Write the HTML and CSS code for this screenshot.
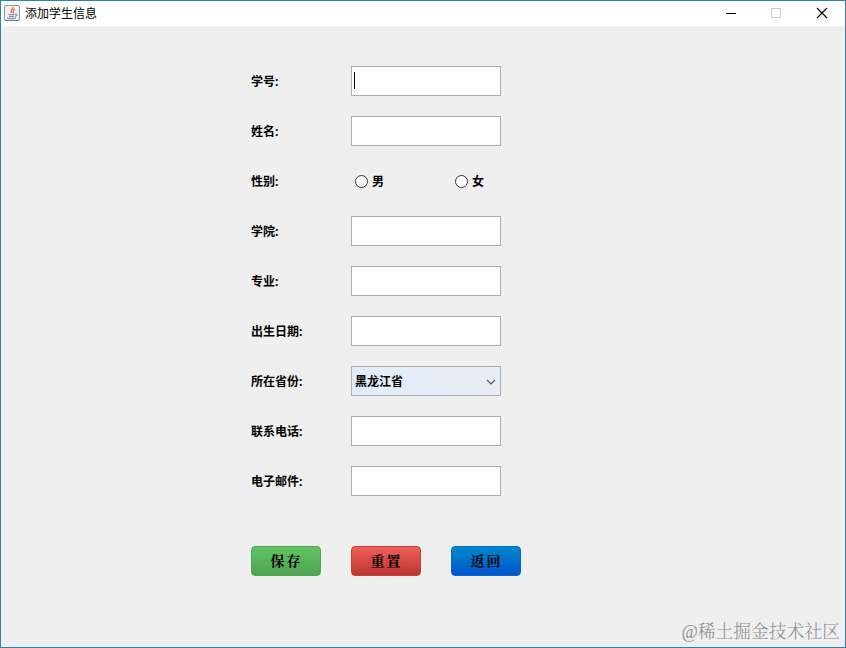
FILE: index.html
```html
<!DOCTYPE html>
<html lang="zh-CN">
<head>
<meta charset="utf-8">
<title>添加学生信息</title>
<link rel="stylesheet" href="styles.css">
</head>
<body>
<div class="window">
  <header class="titlebar">
    <svg class="app-icon" width="16" height="16" viewBox="0 0 16 16" fill="none">
      <rect x=".5" y=".5" width="15" height="15" rx="1.5" fill="#eef2f5" stroke="#8495a6"/>
      <path d="M1 15.500h14" stroke="#66798d"/>
      <path d="M9 2c1.200 2-3.600 3-1.400 6M10.800 4.200C7.800 5.500 10.200 6.700 8.800 8.400" stroke="#e8763a" stroke-width="1.400"/>
      <path d="M4.500 9.300c1.500.7 4.500.6 6 0M5 11.200c1.300.6 3.700.6 5 0M3 12.900c2.500 1.200 7 1 9 0M11 9.200c2.800-.7 2.800 1.700 0 2" stroke="#52799e"/>
    </svg>
    <span class="title">添加学生信息</span>
    <svg class="control" width="46" height="25" viewBox="0 0 46 25"><path d="M18 12.500h10" stroke="#000"/></svg>
    <svg class="control" width="45" height="25" viewBox="0 0 45 25"><rect x="17.500" y="7.500" width="9" height="9" fill="none" stroke="#ccc"/></svg>
    <svg class="control" width="46" height="25" viewBox="0 0 46 25"><path d="M18 7l10 10M28 7l-10 10" stroke="#000" stroke-width="1.100"/></svg>
  </header>
  <main class="content">
    <form class="form">
      <div class="row"><span class="label">学号:</span><div class="field"><i class="caret"></i></div></div>
      <div class="row"><span class="label">姓名:</span><div class="field"></div></div>
      <div class="row"><span class="label">性别:</span>
        <div class="choices">
          <span class="choice"><i class="radio"></i><span class="text">男</span></span>
          <span class="choice"><i class="radio"></i><span class="text">女</span></span>
        </div>
      </div>
      <div class="row"><span class="label">学院:</span><div class="field"></div></div>
      <div class="row"><span class="label">专业:</span><div class="field"></div></div>
      <div class="row"><span class="label">出生日期:</span><div class="field"></div></div>
      <div class="row"><span class="label">所在省份:</span>
        <div class="field select"><span class="text">黑龙江省</span>
          <svg class="chevron" width="10" height="6" viewBox="0 0 10 6"><path d="M1 1l4 4 4-4" fill="none" stroke="#555" stroke-width="1.100"/></svg>
        </div>
      </div>
      <div class="row"><span class="label">联系电话:</span><div class="field"></div></div>
      <div class="row"><span class="label">电子邮件:</span><div class="field"></div></div>
      <div class="actions">
        <button type="button" class="button save">保存</button>
        <button type="button" class="button reset">重置</button>
        <button type="button" class="button back">返回</button>
      </div>
    </form>
    <span class="watermark">@稀土掘金技术社区</span>
  </main>
</div>
</body>
</html>
```
FILE: styles.css
```css
* { box-sizing: border-box; }
body { margin: 0; }
.window {
  position: relative;
  width: 846px;
  height: 648px;
  border: 1px solid #2f80b4;
  background: #efefef;
  font: 12px "Noto Sans CJK SC", sans-serif;
  color: #000;
  overflow: hidden;
}
.titlebar {
  display: flex;
  align-items: center;
  height: 25px;
  padding-left: 3px;
  background: #fff;
}
.app-icon { margin-bottom: 1px; }
.title { flex: 1; margin-left: 5px; padding-bottom: 2px; line-height: 22px; }
.control { display: block; }
.content { padding: 40px 0 0 250px; }
.form { display: flex; flex-direction: column; gap: 20px; }
.row { display: flex; height: 30px; align-items: center; }
.label {
  width: 100px;
  padding-top: 2px;
  font-family: "Open Sans", "Noto Sans CJK SC", sans-serif;
  font-weight: 700;
  line-height: 30px;
}
.text { line-height: 18px; }
.field {
  display: flex;
  align-items: center;
  width: 150px;
  height: 30px;
  padding: 0 2px;
  border: 1px solid #abadb3;
  background: #fff;
}
.caret { width: 1px; height: 17px; margin-bottom: 2px; background: #000; }
.choices { display: flex; }
.choice {
  display: flex;
  align-items: center;
  gap: 4px;
  width: 100px;
  padding-left: 4px;
  font-weight: 700;
}
.radio {
  width: 13px;
  height: 13px;
  border: 1px solid #333;
  border-radius: 50%;
  background: #fff;
}
.select {
  justify-content: space-between;
  padding: 0 4px 0 3px;
  background: linear-gradient(90deg, #e2ecf8, #e7ecf5);
  font-weight: 700;
}
.chevron { margin-top: 2px; }
.actions { display: flex; gap: 30px; margin-top: 30px; }
.button {
  width: 70px;
  height: 30px;
  padding: 0 0 2px 1px;
  border: 1px solid;
  border-radius: 4px;
  font: 700 14px/24px "AR PL UKai CN", "Noto Serif CJK SC", "Noto Sans CJK SC", serif;
  letter-spacing: 2px;
  color: #000;
}
.save { border-color: #4da750; background: linear-gradient(#62c462, #51a351); }
.reset { border-color: #c0403b; background: linear-gradient(#ee5f5b, #bd362f); }
.back { border-color: #0468c4; background: linear-gradient(#0088cc, #0055cc); }
.watermark {
  position: absolute;
  right: 5px;
  bottom: 2px;
  font: 300 17.800px/26px "Liberation Serif", "Noto Serif CJK SC", "Noto Sans CJK SC", serif;
  color: #8c8c8c;
}
```
